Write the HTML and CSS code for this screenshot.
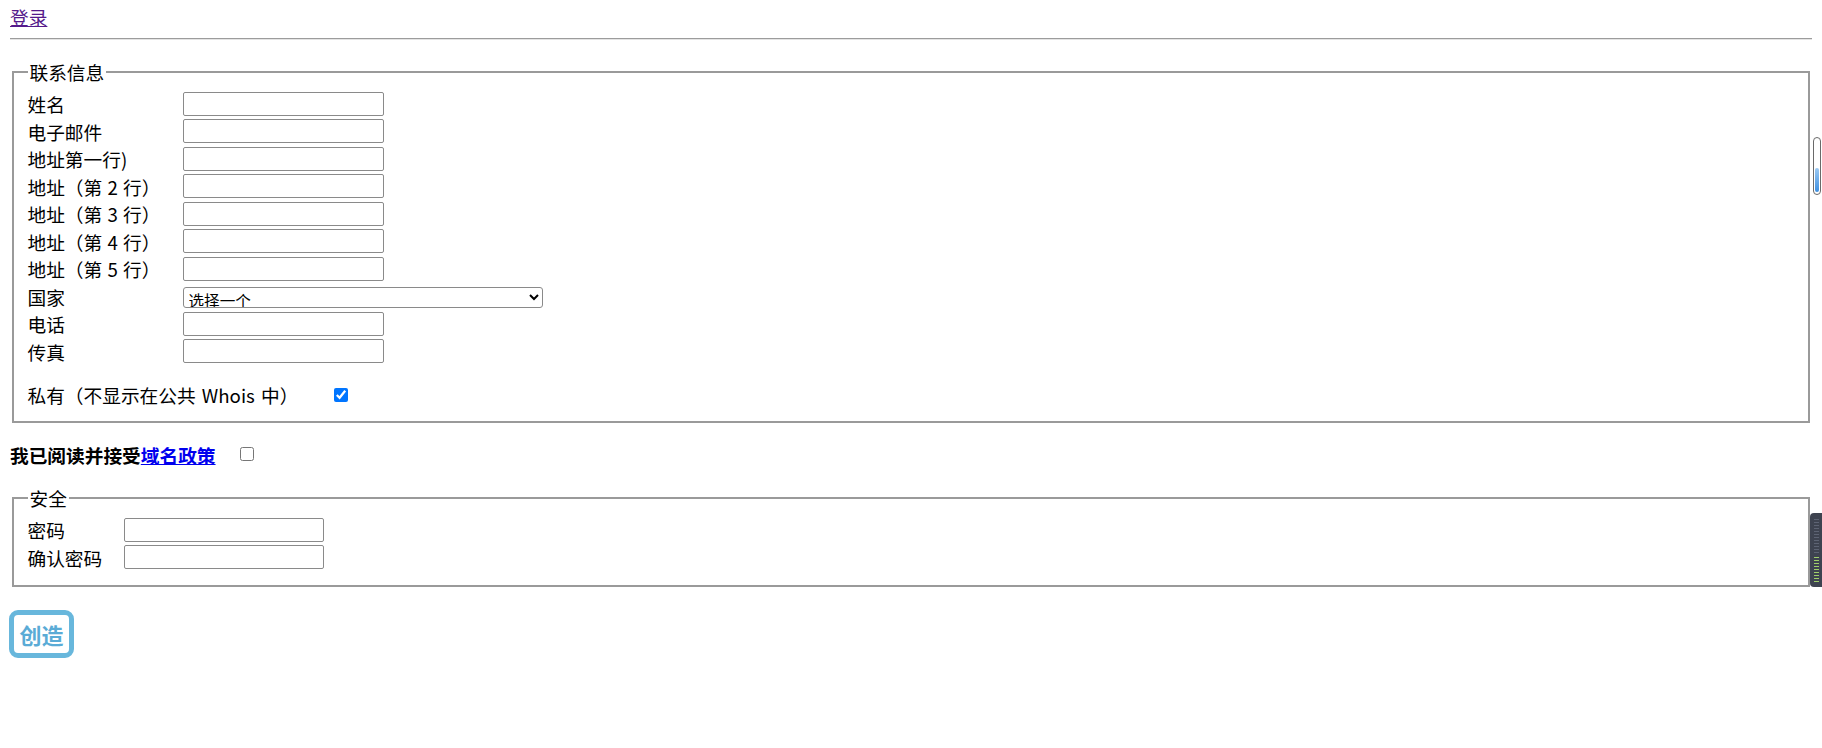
FILE: index.html
```html
<!DOCTYPE html>
<html lang="zh-CN">
<head>
    <meta charset="UTF-8">
    <meta name="viewport" content="width=device-width, initial-scale=1.0">
    <title>注册域名</title>
    <link rel="stylesheet" href="styles.css">
</head>
<body>

    <div class="top-links">
        <a href="#" class="seen">登录</a>
    </div>
    <hr class="top-rule">

    <form class="reg-form">
        <fieldset class="box">
            <legend>联系信息</legend>
            <div class="fields contact">
                <label>姓名</label><input type="text">
                <label>电子邮件</label><input type="text">
                <label>地址第一行)</label><input type="text">
                <label>地址（第 2 行）</label><input type="text">
                <label>地址（第 3 行）</label><input type="text">
                <label>地址（第 4 行）</label><input type="text">
                <label>地址（第 5 行）</label><input type="text">
                <label>国家</label>
                <select>
                    <option>选择一个</option>
                </select>
                <label>电话</label><input type="text">
                <label>传真</label><input type="text">
            </div>
            <div class="private-row">
                <span class="private-label">私有（不显示在公共 Whois 中）</span>
                <input type="checkbox" checked>
            </div>
        </fieldset>

        <p class="agree">我已阅读并接受<a href="#">域名政策</a><input type="checkbox"></p>

        <fieldset class="box">
            <legend>安全</legend>
            <div class="fields security">
                <label>密码</label><input type="password">
                <label>确认密码</label><input type="password">
            </div>
        </fieldset>

        <div class="actions">
            <button type="button" class="create-btn">创造</button>
        </div>
    </form>

    <!-- виджеты расширения браузера справа -->
    <div class="ext-pill"><span></span></div>
    <div class="ext-meter"></div>

</body>
</html>
```

FILE: styles.css
```css
body {
    margin: 0;
    padding: 4px 10px 0;
    font-family: "Noto Sans CJK SC", sans-serif;
    font-size: 18.7px;
    line-height: 25px;
    color: #000;
    background-color: #ffffff;
}
a {
    color: #0000ee;
}
a.seen {
    color: #551a8b;
}
.top-rule {
    margin: 9px 0 19px;
    height: 0;
    border: 0;
    border-top: 1px solid #9c9c9c;
    border-bottom: 1px solid #e4e4e4;
}
.box {
    margin: 0 2px;
    padding: 6px 13.5px 12px;
    border: 2px solid #9a9a9a;
}
.box legend {
    padding: 0 2px;
    line-height: 25px;
}
.fields {
    display: grid;
    grid-auto-rows: 27.5px;
    align-items: center;
    justify-items: start;
}
.contact {
    grid-template-columns: 155px auto;
}
.security {
    grid-template-columns: 96px auto;
    margin-bottom: 1.5px;
}
.fields label {
    word-spacing: 1px;
}
.fields input {
    box-sizing: border-box;
    width: 201px;
    height: 24px;
    margin: 0;
    border: 1px solid #8a8a8a;
    border-radius: 2px;
}
.security input {
    width: 200px;
}
.fields select {
    box-sizing: border-box;
    width: 360px;
    height: 21px;
    margin: 3px 0 0;
    padding: 0 1px;
    font-family: "Noto Sans CJK SC", sans-serif;
    font-size: 15.6px;
    line-height: 18px;
    border: 1px solid #8a8a8a;
    border-radius: 3px;
    background-color: #fff;
    color: #000;
}
.private-row {
    display: flex;
    align-items: center;
    margin-top: 15.5px;
    height: 28px;
}
.private-label {
    width: 306px;
    word-spacing: 2px;
}
.private-row input,
.agree input {
    width: 14px;
    height: 14px;
    margin: 0;
}
.agree {
    margin: 19px 0 18.5px;
    font-weight: bold;
    display: flex;
    align-items: center;
}
.agree input {
    margin-left: 24px;
}
.actions {
    margin-top: 23px;
}
.create-btn {
    box-sizing: border-box;
    width: 65px;
    height: 48px;
    padding: 0;
    margin-left: -1px;
    border: 5px solid #68b7dc;
    border-radius: 9px;
    background-color: #ffffff;
    color: #5aabd6;
    font-family: "Noto Sans CJK SC", sans-serif;
    font-size: 22px;
    font-weight: bold;
    line-height: 30px;
    cursor: pointer;
}

/* оверлеи расширения */
.ext-pill {
    position: absolute;
    left: 1813px;
    top: 137px;
    width: 6px;
    height: 56px;
    border: 1.5px solid #6a6a6a;
    border-radius: 5px;
    background: #fff;
}
.ext-pill span {
    position: absolute;
    left: 1px;
    right: 1px;
    bottom: 2px;
    height: 24px;
    border-radius: 2px;
    background: linear-gradient(#9cc9f2, #3d8fe0);
}
.ext-meter {
    position: absolute;
    left: 1810px;
    top: 513px;
    width: 12px;
    height: 74px;
    border-radius: 4px 0 0 4px;
    background:
        repeating-linear-gradient(#9fcf6a 0 1px, transparent 1px 3px) 4px 44px / 5px 26px no-repeat,
        repeating-linear-gradient(#5d6373 0 1px, transparent 1px 3px) 4px 6px / 5px 36px no-repeat,
        #3e4350;
}
```
